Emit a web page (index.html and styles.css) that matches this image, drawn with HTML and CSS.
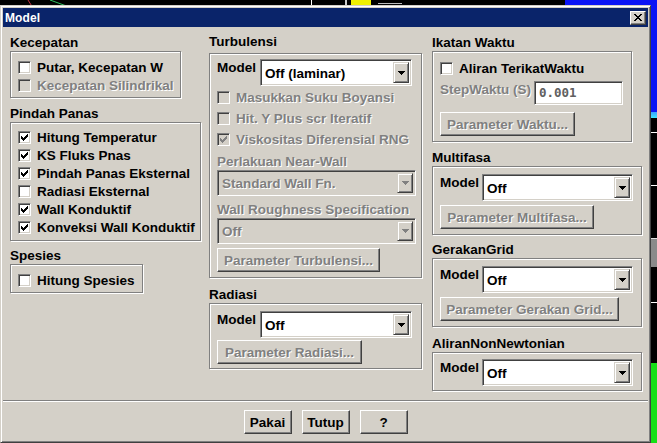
FILE: index.html
```html
<!DOCTYPE html>
<html>
<head>
<meta charset="utf-8">
<link rel="stylesheet" href="styles.css">
</head>
<body>
<div class="desktop">
  <svg class="deco deco-top" width="657" height="8" viewBox="0 0 657 8">
    <line x1="28" y1="0" x2="33" y2="8" stroke="#c03040" stroke-width="1"/>
    <line x1="50" y1="0" x2="72" y2="8" stroke="#30c060" stroke-width="1"/>
    <rect x="311" y="0" width="1" height="8" fill="#fff"/>
    <rect x="345" y="0" width="2" height="8" fill="#ccc"/>
    <rect x="351" y="0" width="20" height="8" fill="#f0f000"/>
    <rect x="378" y="3" width="24" height="1" fill="#bbb"/>
    <rect x="565" y="0" width="92" height="8" fill="#0a14f5"/>
  </svg>
  <div class="deco deco-blue"></div>
  <div class="deco deco-cyan"></div>
  <div class="deco deco-tick t1"></div>
  <div class="deco deco-tick t2"></div>
  <div class="deco deco-grey"></div>
  <div class="deco deco-tick t3"></div>
  <div class="deco deco-green"></div>

  <div class="dialog">
    <div class="titlebar">
      <span class="title">Model</span>
      <span class="close-btn"><svg width="8" height="7" viewBox="0 0 8 7"><path d="M0 0h2v1h-2zM6 0h2v1h-2zM1 1h2v1h-2zM5 1h2v1h-2zM2 2h4v1h-4zM3 3h2v1h-2zM2 4h4v1h-4zM1 5h2v1h-2zM5 5h2v1h-2zM0 6h2v1h-2zM6 6h2v1h-2z" fill="#000"/></svg></span>
    </div>

    <div class="content">
      <!-- Column 1 -->
      <div class="col col1">
        <div class="glabel first">Kecepatan</div>
        <div class="gbox kec">
          <div class="cb"><span class="box"></span><span>Putar, Kecepatan W</span></div>
          <div class="cb dis"><span class="box"></span><span>Kecepatan Silindrikal</span></div>
        </div>

        <div class="glabel">Pindah Panas</div>
        <div class="gbox pp">
          <div class="cb"><span class="box"><svg class="chk" width="7" height="7" viewBox="0 0 7 7"><path d="M0 2h1v3h-1zM1 3h1v3h-1zM2 4h1v3h-1zM3 3h1v3h-1zM4 2h1v3h-1zM5 1h1v3h-1zM6 0h1v3h-1z"/></svg></span><span>Hitung Temperatur</span></div>
          <div class="cb"><span class="box"><svg class="chk" width="7" height="7" viewBox="0 0 7 7"><path d="M0 2h1v3h-1zM1 3h1v3h-1zM2 4h1v3h-1zM3 3h1v3h-1zM4 2h1v3h-1zM5 1h1v3h-1zM6 0h1v3h-1z"/></svg></span><span>KS Fluks Pnas</span></div>
          <div class="cb"><span class="box"><svg class="chk" width="7" height="7" viewBox="0 0 7 7"><path d="M0 2h1v3h-1zM1 3h1v3h-1zM2 4h1v3h-1zM3 3h1v3h-1zM4 2h1v3h-1zM5 1h1v3h-1zM6 0h1v3h-1z"/></svg></span><span>Pindah Panas Eksternal</span></div>
          <div class="cb"><span class="box"></span><span>Radiasi Eksternal</span></div>
          <div class="cb"><span class="box"><svg class="chk" width="7" height="7" viewBox="0 0 7 7"><path d="M0 2h1v3h-1zM1 3h1v3h-1zM2 4h1v3h-1zM3 3h1v3h-1zM4 2h1v3h-1zM5 1h1v3h-1zM6 0h1v3h-1z"/></svg></span><span>Wall Konduktif</span></div>
          <div class="cb"><span class="box"><svg class="chk" width="7" height="7" viewBox="0 0 7 7"><path d="M0 2h1v3h-1zM1 3h1v3h-1zM2 4h1v3h-1zM3 3h1v3h-1zM4 2h1v3h-1zM5 1h1v3h-1zM6 0h1v3h-1z"/></svg></span><span>Konveksi Wall Konduktif</span></div>
        </div>

        <div class="glabel sp">Spesies</div>
        <div class="gbox spes">
          <div class="cb"><span class="box"></span><span>Hitung Spesies</span></div>
        </div>
      </div>

      <!-- Column 2 -->
      <div class="col col2">
        <div class="glabel first turb">Turbulensi</div>
        <div class="gbox turbbox">
          <div class="mrow">
            <span class="mlabel">Model</span>
            <div class="combo w152"><span class="ctext">Off (laminar)</span><span class="cbtn"><svg width="7" height="4" viewBox="0 0 7 4"><path d="M0 0h7v1h-7zM1 1h5v1h-5zM2 2h3v1h-3zM3 3h1v1h-1z"/></svg></span></div>
          </div>
          <div class="rows21">
            <div class="cb dis r21"><span class="box"></span><span>Masukkan Suku Boyansi</span></div>
            <div class="cb dis r21"><span class="box"></span><span>Hit. Y Plus scr Iteratif</span></div>
            <div class="cb dis r21"><span class="box"><svg class="chk" width="7" height="7" viewBox="0 0 7 7"><path d="M0 2h1v3h-1zM1 3h1v3h-1zM2 4h1v3h-1zM3 3h1v3h-1zM4 2h1v3h-1zM5 1h1v3h-1zM6 0h1v3h-1z"/></svg></span><span>Viskositas Diferensial RNG</span></div>
          </div>
          <div class="flabel dtext nw">Perlakuan Near-Wall</div>
          <div class="combo dcombo w199"><span class="ctext">Standard Wall Fn.</span><span class="cbtn"><svg width="7" height="4" viewBox="0 0 7 4"><path d="M0 0h7v1h-7zM1 1h5v1h-5zM2 2h3v1h-3zM3 3h1v1h-1z"/></svg></span></div>
          <div class="flabel dtext wr">Wall Roughness Specification</div>
          <div class="combo dcombo w199"><span class="ctext">Off</span><span class="cbtn"><svg width="7" height="4" viewBox="0 0 7 4"><path d="M0 0h7v1h-7zM1 1h5v1h-5zM2 2h3v1h-3zM3 3h1v1h-1z"/></svg></span></div>
          <div class="btn dbtn w163 mt4">Parameter Turbulensi...</div>
        </div>

        <div class="glabel rad">Radiasi</div>
        <div class="gbox radbox">
          <div class="mrow">
            <span class="mlabel">Model</span>
            <div class="combo w152"><span class="ctext">Off</span><span class="cbtn"><svg width="7" height="4" viewBox="0 0 7 4"><path d="M0 0h7v1h-7zM1 1h5v1h-5zM2 2h3v1h-3zM3 3h1v1h-1z"/></svg></span></div>
          </div>
          <div class="btn dbtn w145 mt2">Parameter Radiasi...</div>
        </div>
      </div>

      <!-- Column 3 -->
      <div class="col col3">
        <div class="glabel first">Ikatan Waktu</div>
        <div class="gbox ikbox">
          <div class="cb"><span class="box"></span><span>Aliran TerikatWaktu</span></div>
          <div class="steprow">
            <span class="flabel dtext">StepWaktu (S)</span>
            <div class="tinput">0.001</div>
          </div>
          <div class="btn dbtn w135 mt7">Parameter Waktu...</div>
        </div>

        <div class="glabel">Multifasa</div>
        <div class="gbox r3box">
          <div class="mrow">
            <span class="mlabel">Model</span>
            <div class="combo w151"><span class="ctext">Off</span><span class="cbtn"><svg width="7" height="4" viewBox="0 0 7 4"><path d="M0 0h7v1h-7zM1 1h5v1h-5zM2 2h3v1h-3zM3 3h1v1h-1z"/></svg></span></div>
          </div>
          <div class="btn dbtn w154 mt4">Parameter Multifasa...</div>
        </div>

        <div class="glabel gg">GerakanGrid</div>
        <div class="gbox r3box">
          <div class="mrow">
            <span class="mlabel">Model</span>
            <div class="combo w151"><span class="ctext">Off</span><span class="cbtn"><svg width="7" height="4" viewBox="0 0 7 4"><path d="M0 0h7v1h-7zM1 1h5v1h-5zM2 2h3v1h-3zM3 3h1v1h-1z"/></svg></span></div>
          </div>
          <div class="btn dbtn w179 mt4">Parameter Gerakan Grid...</div>
        </div>

        <div class="glabel nn">AliranNonNewtonian</div>
        <div class="gbox nnbox">
          <div class="mrow">
            <span class="mlabel">Model</span>
            <div class="combo w151"><span class="ctext">Off</span><span class="cbtn"><svg width="7" height="4" viewBox="0 0 7 4"><path d="M0 0h7v1h-7zM1 1h5v1h-5zM2 2h3v1h-3zM3 3h1v1h-1z"/></svg></span></div>
          </div>
        </div>
      </div>
    </div>

    <div class="separator"></div>

    <div class="footer">
      <div class="btn fbtn">Pakai</div>
      <div class="btn fbtn">Tutup</div>
      <div class="btn fbtn">?</div>
    </div>
  </div>
</div>
</body>
</html>
```

FILE: styles.css
```css
* { box-sizing: border-box; }
html, body { margin: 0; padding: 0; }
body {
  background: #000;
  width: 657px;
  height: 443px;
  overflow: hidden;
  font-family: "Liberation Sans", Arial, sans-serif;
  font-weight: bold;
  font-size: 13.5px;
  color: #000;
}
.desktop { position: relative; width: 657px; height: 443px; overflow: hidden; background: #000; }
.deco { position: absolute; }
.deco-top { left: 0; top: 0; }
.deco-blue { left: 600px; top: 0; width: 57px; height: 112px; background: #0a14f5; }
.deco-cyan { left: 600px; top: 112px; width: 57px; height: 6px; background: linear-gradient(#3aa0ff, #40e8ff); }
.deco-tick { left: 651px; width: 6px; height: 1px; background: #fff; }
.t1 { top: 132px; }
.t2 { top: 185px; }
.t3 { top: 302px; }
.deco-grey { left: 651px; top: 238px; width: 6px; height: 29px; background: linear-gradient(#e0e0e0 0 1px, #8a8a8a 1px); }
.deco-green { left: 651px; top: 363px; width: 6px; height: 80px; background: #16e016; }

.dialog {
  position: absolute;
  left: 0; top: 5px;
  width: 651px; height: 438px;
  background: #d4d0c8;
  border: 1px solid;
  border-color: #d4d0c8 #404040 #404040 #d4d0c8;
  box-shadow: inset 1px 1px 0 #fff, inset -1px -1px 0 #808080;
  padding: 2px;
  display: flex;
  flex-direction: column;
}
.titlebar {
  height: 19px;
  background: #0a246a;
  color: #fff;
  display: flex;
  align-items: center;
  justify-content: space-between;
  padding: 0 2px 0 2px;
  flex: none;
}
.title { font-size: 12px; font-weight: bold; letter-spacing: 0.1px; }
.close-btn {
  width: 16px; height: 14px;
  background: #d4d0c8;
  border: 1px solid;
  border-color: #fff #404040 #404040 #fff;
  box-shadow: inset -1px -1px 0 #808080;
  display: flex; align-items: center; justify-content: center;
  padding-right: 1px;
}
.close-btn svg { display: block; }

.content { height: 373px; display: flex; padding-left: 7px; flex: none; }
.col { display: flex; flex-direction: column; align-items: flex-start; }
.col1 { width: 192px; }
.col2 { width: 213px; margin-left: 7px; }
.col3 { width: 210px; margin-left: 10px; }

.glabel { height: 17px; line-height: 17px; margin-top: 7px; white-space: nowrap; }
.glabel.first { margin-top: 7px; }
.glabel.turb { margin-top: 6px; }
.glabel.sp { margin-top: 6px; }
.glabel.rad { margin-top: 8px; }
.glabel.gg { margin-top: 6px; }
.glabel.nn { margin-top: 8px; }

.gbox {
  border: 1px solid #808080;
  box-shadow: inset 1px 1px 0 #fff, 1px 1px 0 #fff;
  padding: 6px 6px 3px 7px;
  display: flex;
  flex-direction: column;
  align-items: flex-start;
}
.col1 .gbox { width: 191px; }
.gbox.kec { width: 171px; padding-top: 6px; padding-bottom: 3px; }
.gbox.pp { width: 191px; padding-top: 5px; padding-bottom: 4px; }
.gbox.spes { width: 133px; padding-top: 6px; padding-bottom: 3px; }
.turbbox { width: 213px; margin-top: 3px; padding-top: 5px; padding-bottom: 5px; }
.radbox { width: 213px; padding-top: 7px; padding-bottom: 4px; }
.ikbox { width: 200px; padding-top: 7px; padding-bottom: 5px; }
.r3box { width: 210px; padding-top: 7px; padding-bottom: 5px; }
.nnbox { width: 210px; padding-top: 6px; padding-bottom: 4px; }

.cb { display: flex; align-items: center; height: 18px; white-space: nowrap; }
.cb.r21 { height: 21px; }
.rows21 { margin-top: 1px; display: flex; flex-direction: column; }
.box {
  width: 13px; height: 13px;
  flex: none;
  margin-right: 6px;
  background: #fff;
  border: 1px solid;
  border-color: #808080 #fff #fff #808080;
  box-shadow: inset 1px 1px 0 #404040, inset -1px -1px 0 #d4d0c8;
  display: flex; align-items: center; justify-content: center;
}
.chk { display: block; fill: #000; }
.cb.dis { color: #808080; text-shadow: 1px 1px 0 #fff; }
.cb.dis .box { background: #d4d0c8; }
.cb.dis .chk { fill: #808080; }

.dtext { color: #808080; text-shadow: 1px 1px 0 #fff; }
.flabel { height: 17px; line-height: 17px; white-space: nowrap; }
.flabel.nw { margin-top: 3px; }
.flabel.wr { margin-top: 5px; }

.mrow { display: flex; align-items: flex-start; }
.mlabel { height: 17px; line-height: 17px; margin-right: 4px; white-space: nowrap; }
.col3 .mlabel { margin-right: 3px; }

.combo {
  height: 27px;
  display: flex;
  align-items: stretch;
  background: #fff;
  border: 1px solid;
  border-color: #808080 #fff #fff #808080;
  box-shadow: inset 1px 1px 0 #404040, inset -1px -1px 0 #d4d0c8;
  padding: 2px 2px 2px 1px;
}
.combo.dcombo { height: 26px; background: #d4d0c8; color: #808080; text-shadow: 1px 1px 0 #fff; }
.w152 { width: 152px; }
.w151 { width: 151px; }
.w199 { width: 199px; }
.ctext { flex: 1; display: flex; align-items: center; padding-left: 3px; padding-top: 1px; white-space: nowrap; }
.cbtn {
  width: 16px;
  flex: none;
  background: #d4d0c8;
  border: 1px solid;
  border-color: #d4d0c8 #404040 #404040 #d4d0c8;
  box-shadow: inset 1px 1px 0 #fff, inset -1px -1px 0 #808080;
  display: flex; align-items: center; justify-content: center;
  text-shadow: none;
}
.cbtn svg { display: block; fill: #000; }
.dcombo .cbtn svg { fill: #808080; }

.btn {
  height: 24px;
  background: #d4d0c8;
  border: 1px solid;
  border-color: #fff #404040 #404040 #fff;
  box-shadow: inset -1px -1px 0 #808080, inset 1px 1px 0 #d4d0c8;
  display: flex; align-items: center; justify-content: center;
  white-space: nowrap;
  flex: none;
}
.dbtn { color: #808080; text-shadow: 1px 1px 0 #fff; }
.w163 { width: 163px; }
.w145 { width: 145px; }
.w135 { width: 135px; }
.w154 { width: 154px; }
.w179 { width: 179px; }
.mt2 { margin-top: 2px; }
.mt4 { margin-top: 4px; }
.mt7 { margin-top: 7px; }

.steprow { display: flex; align-items: flex-start; margin-top: 4px; }
.steprow .flabel { width: 94px; }
.tinput {
  width: 89px; height: 24px;
  background: #fff;
  border: 1px solid;
  border-color: #808080 #fff #fff #808080;
  box-shadow: inset 1px 1px 0 #404040, inset -1px -1px 0 #d4d0c8;
  font-family: "DejaVu Sans Mono", "Liberation Mono", monospace;
  font-weight: bold;
  font-size: 12.5px;
  color: #606060;
  line-height: 22px;
  padding-left: 4px;
}

.separator {
  height: 2px;
  flex: none;
  border-top: 1px solid #808080;
  border-bottom: 1px solid #fff;
}
.footer {
  flex: none;
  display: flex;
  justify-content: center;
  gap: 10px;
  padding-top: 8px;
}
.fbtn { width: 48px; }
```
